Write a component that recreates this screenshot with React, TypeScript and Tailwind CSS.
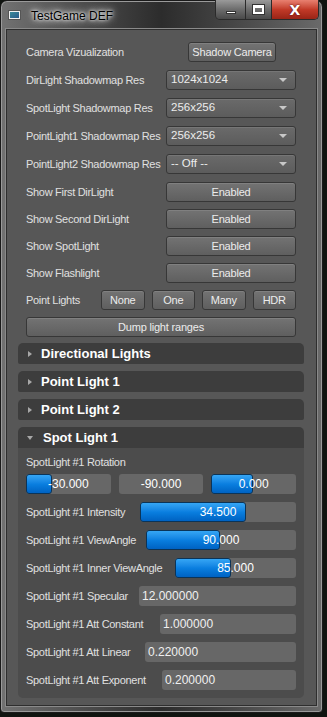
import React from "react";

const font = { fontFamily: '"Liberation Sans", Arial, sans-serif' };

function WinButtons() {
    return (
        <div className="flex h-[20px] mt-[-1px] rounded-b-[5px] border border-[#2a2a2a] border-t-0 overflow-hidden">
            <div className="w-[30px] h-full bg-gradient-to-b from-[#9a9a9a] via-[#6c6c6c] to-[#4a4a4a] border-r border-[#2a2a2a] flex items-center justify-center">
                <div className="w-[10px] h-[3px] bg-white border border-[#333] mt-[5px]" />
            </div>
            <div className="w-[26px] h-full bg-gradient-to-b from-[#9a9a9a] via-[#6c6c6c] to-[#4a4a4a] border-r border-[#2a2a2a] flex items-center justify-center">
                <div className="w-[11px] h-[9px] border-[2px] border-white border-t-[3px] outline outline-1 outline-[#333]" />
            </div>
            <div className="w-[46px] h-full bg-gradient-to-b from-[#e88070] via-[#c23a28] to-[#9a2416] flex items-center justify-center">
                <span className="text-white font-bold text-[14px] leading-none" style={{ fontFamily: '"DejaVu Sans", sans-serif', textShadow: "0 0 2px #400" }}>
                    X
                </span>
            </div>
        </div>
    );
}

function Btn({ children, className = "" }: { children: React.ReactNode; className?: string }) {
    return (
        <div
            className={`h-[20px] rounded-[3px] border border-[#373737] bg-gradient-to-b from-[#737373] to-[#5f5f5f] text-[#ececec] text-[11px] tracking-[-0.2px] flex items-center justify-center shadow-[inset_0_1px_0_#808080] ${className}`}
        >
            {children}
        </div>
    );
}

function Combo({ value }: { value: string }) {
    return (
        <div className="flex-1 h-[20px] rounded-[3px] border border-[#373737] bg-gradient-to-b from-[#6a6a6a] to-[#5c5c5c] text-[#ececec] text-[11.5px] flex items-center pl-[4px] pr-[8px] shadow-[inset_0_1px_0_#767676]">
            <span className="flex-1">{value}</span>
            <span className="w-0 h-0 border-l-[4px] border-r-[4px] border-t-[4px] border-l-transparent border-r-transparent border-t-[#c8c8c8]" />
        </div>
    );
}

function Slider({ value, fill, className = "flex-1" }: { value: string; fill: number; className?: string }) {
    return (
        <div className={`relative h-[20px] rounded-[3px] bg-[#676767] ${className}`}>
            {fill > 0 && (
                <div
                    className="absolute left-0 top-0 bottom-0 rounded-[3px] border border-[#0b3458] bg-gradient-to-b from-[#35a6f5] via-[#0a7fe0] to-[#0062c2]"
                    style={{ width: `${fill}%` }}
                />
            )}
            <div className="absolute inset-0 flex items-center justify-center text-white text-[12px]">{value}</div>
        </div>
    );
}

function Label({ children, w }: { children: React.ReactNode; w: string }) {
    return <span className={`${w} shrink-0 text-[#e0e0e0] text-[11px] tracking-[-0.3px] whitespace-nowrap`}>{children}</span>;
}

function Field({ label, value, w }: { label: string; value: string; w: string }) {
    return (
        <div className="flex items-center">
            <Label w={w}>{label}</Label>
            <div className="flex-1 h-[20px] rounded-[3px] bg-[#676767] text-[#f0f0f0] text-[12px] flex items-center pl-[3px]">{value}</div>
        </div>
    );
}

function Header({ title, open = false }: { title: string; open?: boolean }) {
    return (
        <div className={`h-[21px] bg-[#3d3d3d] flex items-center pl-[10px] gap-[7px] ${open ? "rounded-t-[5px]" : "rounded-t-[5px] rounded-b-[2px]"}`}>
            {open ? (
                <span className="w-0 h-0 border-l-[3px] border-r-[3px] border-t-[4px] border-l-transparent border-r-transparent border-t-[#a8a8a8] ml-[-1px] mr-[1px]" />
            ) : (
                <span className="w-0 h-0 border-t-[3px] border-b-[3px] border-l-[4px] border-t-transparent border-b-transparent border-l-[#a8a8a8]" />
            )}
            <span className="text-white font-bold text-[13px] ml-[2px]">{title}</span>
        </div>
    );
}

export default function App() {
    const resRows = [
        ["DirLight Shadowmap Res", "1024x1024"],
        ["SpotLight Shadowmap Res", "256x256"],
        ["PointLight1 Shadowmap Res", "256x256"],
        ["PointLight2 Shadowmap Res", "-- Off --"],
    ];
    const showRows = ["Show First DirLight", "Show Second DirLight", "Show SpotLight", "Show Flashlight"];

    return (
        <div className="w-[327px] h-[717px] bg-[#101410] flex" style={font}>
            <div className="w-[323px] h-[713px] rounded-t-[7px] rounded-b-[4px] border border-[#1a1a1a] bg-gradient-to-r from-[#727272] via-[#2c2c2c] to-[#6a6a6a] flex flex-col shadow-[inset_0_0_0_1px_#9a9a9a]">
                {/* title bar */}
                <div className="h-[28px] flex items-start pl-[7px] pr-[3px]">
                    <div className="mt-[9px] w-[13px] h-[10px] bg-[#f0f0f0] border border-[#555] flex p-[1px]">
                        <div className="flex-1 bg-gradient-to-br from-[#3a8a9a] to-[#2a5a8a]" />
                    </div>
                    <span
                        className="mt-[6px] ml-[8px] text-[12px] text-black px-[2px]"
                        style={{ textShadow: "0 0 6px #fff, 0 0 10px #ddd, 0 0 3px #fff" }}
                    >
                        TestGame DEF
                    </span>
                    <div className="ml-auto">
                        <WinButtons />
                    </div>
                </div>

                {/* client */}
                <div className="flex-1 px-[5px] pb-[6px]">
                    <div className="h-full border border-[#2e2e2e] bg-[#575757] pt-[12px] pl-[11px] pr-[12px] flex flex-col shadow-[0_0_0_1px_#8a8a8a]">
                        <div className="px-[8px] flex flex-col gap-[8px]">
                            <div className="flex items-center">
                                <Label w="w-[162px]">Camera Vizualization</Label>
                                <Btn className="w-[88px] h-[19px]">Shadow Camera</Btn>
                            </div>
                            {resRows.map(([l, v]) => (
                                <div key={l} className="flex items-center">
                                    <Label w="w-[140px]">{l}</Label>
                                    <Combo value={v} />
                                </div>
                            ))}
                        </div>
                        <div className="px-[8px] mt-[8px] flex flex-col gap-[7px]">
                            {showRows.map((l) => (
                                <div key={l} className="flex items-center">
                                    <Label w="w-[140px]">{l}</Label>
                                    <Btn className="flex-1">Enabled</Btn>
                                </div>
                            ))}
                            <div className="flex items-center gap-[7px]">
                                <Label w="w-[68px]">Point Lights</Label>
                                <Btn className="flex-1">None</Btn>
                                <Btn className="flex-1">One</Btn>
                                <Btn className="flex-1">Many</Btn>
                                <Btn className="flex-1">HDR</Btn>
                            </div>
                            <Btn>Dump light ranges</Btn>
                        </div>

                        <div className="mt-[6px] flex flex-col gap-[7px]">
                            <Header title="Directional Lights" />
                            <Header title="Point Light 1" />
                            <Header title="Point Light 2" />
                            <div className="flex flex-col">
                                <Header title="Spot Light 1" open />
                                <div className="bg-[#4c4c4c] rounded-b-[5px] px-[8px] pt-[7px] pb-[8px] flex flex-col gap-[8px]">
                                    <span className="text-[#e0e0e0] text-[11px] tracking-[-0.3px] leading-[14px] mb-[-3px]">SpotLight #1 Rotation</span>
                                    <div className="flex gap-[8px]">
                                        <Slider value="-30.000" fill={31} />
                                        <Slider value="-90.000" fill={0} />
                                        <Slider value="0.000" fill={49} />
                                    </div>
                                    <div className="flex items-center">
                                        <Label w="w-[114px]">SpotLight #1 Intensity</Label>
                                        <Slider value="34.500" fill={68} />
                                    </div>
                                    <div className="flex items-center">
                                        <Label w="w-[120px]">SpotLight #1 ViewAngle</Label>
                                        <Slider value="90.000" fill={49} />
                                    </div>
                                    <div className="flex items-center">
                                        <Label w="w-[149px]">SpotLight #1 Inner ViewAngle</Label>
                                        <Slider value="85.000" fill={46} />
                                    </div>
                                    <Field w="w-[113px]" label="SpotLight #1 Specular" value="12.000000" />
                                    <Field w="w-[134px]" label="SpotLight #1 Att Constant" value="1.000000" />
                                    <Field w="w-[119px]" label="SpotLight #1 Att Linear" value="0.220000" />
                                    <Field w="w-[136px]" label="SpotLight #1 Att Exponent" value="0.200000" />
                                </div>
                            </div>
                        </div>
                    </div>
                </div>
            </div>
        </div>
    );
}
